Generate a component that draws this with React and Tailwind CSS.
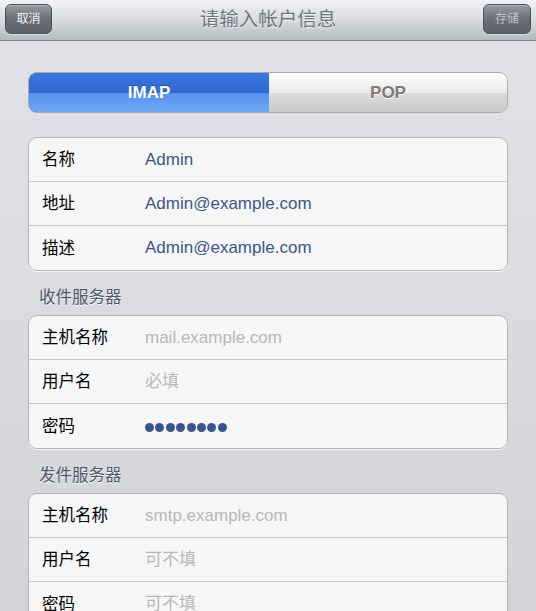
const FONT = { fontFamily: '"Liberation Sans", "Noto Sans CJK SC", sans-serif' }

const ACCOUNT = [
  { label: '名称', value: 'Admin' },
  { label: '地址', value: 'Admin@example.com' },
  { label: '描述', value: 'Admin@example.com' },
]

const INCOMING = [
  { label: '主机名称', hint: 'mail.example.com' },
  { label: '用户名', hint: '必填' },
  { label: '密码', dots: 8 },
]

const OUTGOING = [
  { label: '主机名称', hint: 'smtp.example.com' },
  { label: '用户名', hint: '可不填' },
  { label: '密码', hint: '可不填' },
]

function Row({ row, last }) {
  return (
    <div className={`flex items-center h-[44px] pl-[13px] ${last ? '' : 'border-b border-[#c8c8ca]'}`}>
      <span className="w-[103px] shrink-0 text-[16.5px] text-black">{row.label}</span>
      {row.value && <span className="text-[17px] text-[#3a5690]">{row.value}</span>}
      {row.hint && <span className="text-[17px] text-[#b7b7b9]">{row.hint}</span>}
      {row.dots && (
        <div className="flex gap-[1.4px] pt-[2px]">
          {Array.from({ length: row.dots }).map((_, i) => (
            <span key={i} className="block w-[9px] h-[9px] rounded-full bg-[#37548e]" />
          ))}
        </div>
      )}
    </div>
  )
}

function Card({ rows }) {
  return (
    <div className="mx-[28px] rounded-[9px] border border-[#b3b4b8] bg-[#f7f7f7] shadow-[0_1px_0_rgba(255,255,255,0.8)]">
      {rows.map((r, i) => <Row key={i} row={r} last={i === rows.length - 1} />)}
    </div>
  )
}

function SectionTitle({ children }) {
  return (
    <div className="h-[44px] flex items-center pl-[39px] pt-[8px] text-[16.5px] text-[#4d566a] [text-shadow:0_1px_0_rgba(255,255,255,0.9)]">
      {children}
    </div>
  )
}

export default function App() {
  return (
    <div style={FONT} className="w-[536px] h-[611px] overflow-hidden bg-[linear-gradient(#e1e3e7,#d2d4d8)]">

      {/* Nav bar */}
      <div className="relative h-[41px] flex items-center justify-between px-[5px] border-b border-[#7f838a] bg-[linear-gradient(#f2f3f5,#d6d8dc_55%,#b6b9c0)]">
        <button className="h-[30px] w-[47px] rounded-[6px] border border-[#4c5058] bg-[linear-gradient(#979ba2,#6a6e76_50%,#5c6068)] text-[12px] text-[#f2f3f4] shadow-[inset_0_1px_0_rgba(255,255,255,0.25),0_1px_0_rgba(255,255,255,0.5)] -mt-[2px]">
          取消
        </button>
        <span className="absolute left-0 right-0 text-center text-[19.5px] text-[#6e7480] [text-shadow:0_1px_0_rgba(255,255,255,0.8)] -mt-[1px] pointer-events-none">
          请输入帐户信息
        </span>
        <button className="h-[30px] w-[48px] rounded-[6px] border border-[#4c5058] bg-[linear-gradient(#979ba2,#6a6e76_50%,#5c6068)] text-[12px] text-[#c3c6cb] shadow-[inset_0_1px_0_rgba(255,255,255,0.25),0_1px_0_rgba(255,255,255,0.5)] -mt-[2px]">
          存储
        </button>
      </div>

      {/* Segmented control */}
      <div className="mx-[28px] mt-[31px] h-[41px] flex rounded-[9px] overflow-hidden border border-[#a9aaad]">
        <div className="w-[242px] -m-px h-[41px] flex items-center justify-center rounded-l-[9px] border border-[#1f4fae] bg-[linear-gradient(#3b75dd,#2e68d6_50%,#5692ec_52%,#6ea8f8)] text-[17px] font-bold text-white [text-shadow:0_-1px_0_rgba(0,0,0,0.3)]">
          IMAP
        </div>
        <div className="flex-1 flex items-center justify-center bg-[linear-gradient(#fdfdfd,#ebebeb_50%,#dcdcdc_52%,#cbcbcb)] text-[17px] font-bold text-[#7b7b7b] [text-shadow:0_1px_0_rgba(255,255,255,0.9)]">
          POP
        </div>
      </div>

      <div className="h-[24px]" />
      <Card rows={ACCOUNT} />

      <SectionTitle>收件服务器</SectionTitle>
      <Card rows={INCOMING} />

      <SectionTitle>发件服务器</SectionTitle>
      <Card rows={OUTGOING} />
    </div>
  )
}
